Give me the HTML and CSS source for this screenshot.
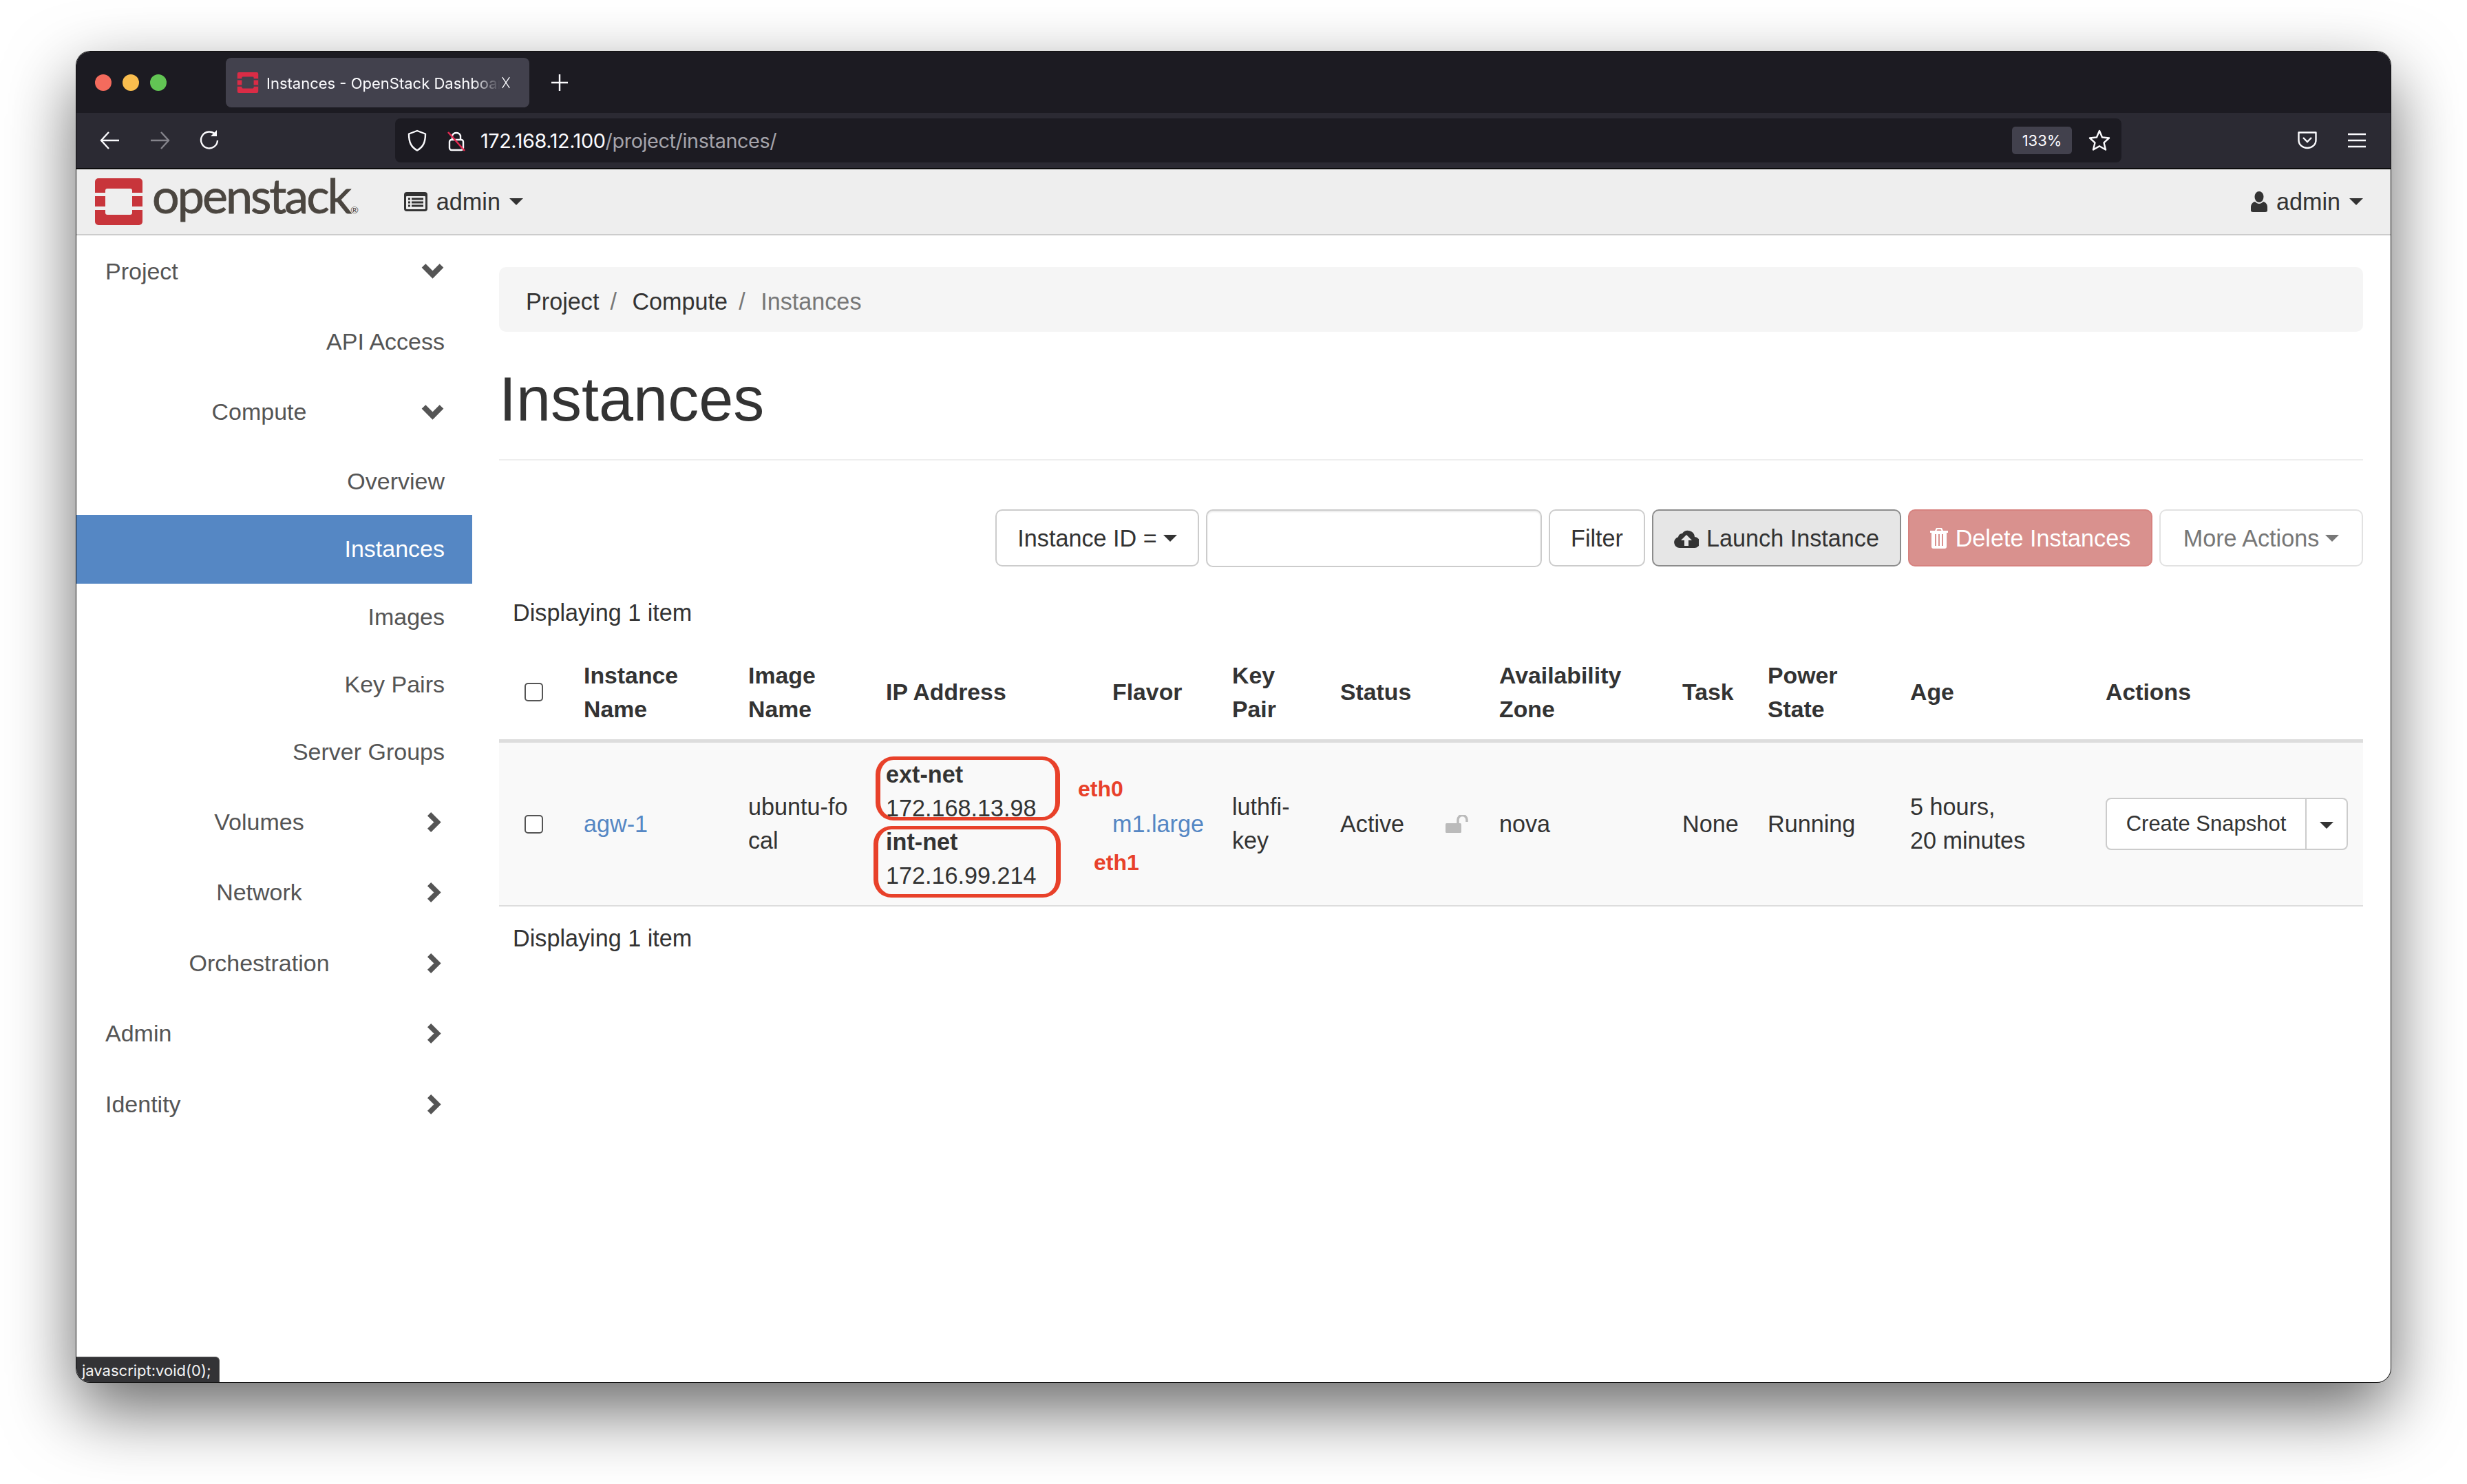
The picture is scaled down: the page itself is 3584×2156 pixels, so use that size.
FILE: index.html
```html
<!DOCTYPE html>
<html lang="en">
  <head>
    <meta charset="UTF-8" />
    <title>Instances - OpenStack Dashboard</title>
    <link rel="stylesheet" href="styles.css">
  </head>
  <body>
    <div class="window">
      <!-- browser chrome -->
      <div class="tabbar">
        <span class="light light-red"></span>
        <span class="light light-yellow"></span>
        <span class="light light-green"></span>
        <div class="tab">
          <svg class="favicon" viewBox="0 0 69 68"><rect width="69" height="68" rx="5" fill="#da2c46"/><rect x="15" y="15" width="39" height="38" rx="3" fill="#42414d"/><rect y="21" width="69" height="5" fill="#42414d"/><rect y="42" width="69" height="5" fill="#42414d"/></svg>
          <span class="tab-title">Instances - OpenStack Dashboard</span>
          <svg class="tab-close" viewBox="0 0 16 24"><path d="M2 3l12 18M14 3L2 21" stroke="#fbfbfe" stroke-width="1.5" fill="none"/></svg>
        </div>
        <svg class="tab-new" viewBox="0 0 24 24"><path d="M12 0v24M0 12h24" stroke="#fbfbfe" stroke-width="2.4" fill="none"/></svg>
      </div>
      <div class="toolbar">
        <span class="tool"><svg width="30" height="26" viewBox="0 0 30 26"><path d="M28 13H2M13 1L2 13l11 12" stroke="#fbfbfe" stroke-width="2.4" fill="none"/></svg></span>
        <span class="tool"><svg width="30" height="26" viewBox="0 0 30 26"><path d="M2 13h26M17 1l11 12-11 12" stroke="#85848c" stroke-width="2.4" fill="none"/></svg></span>
        <span class="tool"><svg width="30" height="30" viewBox="0 0 30 30"><path d="M24 6.5A12 12 0 1 0 27 15" stroke="#fbfbfe" stroke-width="2.4" fill="none"/><path d="M26 0v9h-9z" fill="#fbfbfe"/></svg></span>
        <div class="urlbar">
          <svg class="url-shield" viewBox="0 0 28 32"><path d="M14 2l12 4.500c0 12-3 19-12 24C5 25.500 2 18.500 2 6.500z" stroke="#fbfbfe" stroke-width="2.400" fill="none" stroke-linejoin="round"/></svg>
          <svg class="url-lock" viewBox="0 0 26 32"><path d="M7 15V9a6.500 6.500 0 0 1 12 0v6" stroke="#fbfbfe" stroke-width="2.400" fill="none"/><rect x="3" y="15" width="20" height="15" rx="3" stroke="#fbfbfe" stroke-width="2.400" fill="none"/><path d="M1 4l24 27" stroke="#e22850" stroke-width="2.600"/></svg>
          <span class="url-text">172.168.12.100<span class="url-path">/project/instances/</span></span>
          <span class="zoom-chip">133%</span>
          <svg class="url-star" viewBox="0 0 32 32"><path d="M16 2l4 9.500 10 1-7.500 6.800L25 29.500l-9-5.200-9 5.200 2.500-10.200L2 12.500l10-1z" stroke="#fbfbfe" stroke-width="2.400" fill="none" stroke-linejoin="round"/></svg>
        </div>
        <span class="tool"><svg width="30" height="26" viewBox="0 0 30 26"><path d="M2.500 1.500h25v11c0 7-6 11.500-12.500 11.500S2.500 19.500 2.500 12.500z" stroke="#fbfbfe" stroke-width="2.400" fill="none" stroke-linejoin="round"/><path d="M9 9l6 6 6-6" stroke="#fbfbfe" stroke-width="2.400" fill="none"/></svg></span>
        <span class="tool"><svg width="26" height="22" viewBox="0 0 26 22"><path d="M0 2h26M0 11h26M0 20h26" stroke="#fbfbfe" stroke-width="2.400"/></svg></span>
      </div>

      <!-- openstack navbar -->
      <nav class="navbar">
        <svg class="logo" viewBox="0 0 69 68"><rect width="69" height="68" rx="5" fill="#c8353b"/><rect x="15" y="15" width="39" height="38" rx="3" fill="#eee"/><rect y="21" width="69" height="5" fill="#eee"/><rect y="41" width="69" height="5" fill="#eee"/></svg>
        <span class="brand">openstack<span class="brand-reg">®</span></span>
        <span class="nav-item nav-project">
          <svg class="nav-icon-list" viewBox="0 0 34 28"><path d="M4 0h26a4 4 0 0 1 4 4v20a4 4 0 0 1-4 4H4a4 4 0 0 1-4-4V4a4 4 0 0 1 4-4z" fill="#333"/><rect x="3" y="6" width="28" height="19" rx="1" fill="#eee"/><path d="M6 10h3M11 10h17M6 15h3M11 15h17M6 20h3M11 20h17" stroke="#333" stroke-width="3"/></svg>
          admin <span class="caret"></span>
        </span>
        <span class="nav-item nav-user">
          <svg class="nav-icon-user" viewBox="0 0 24 30"><ellipse cx="12" cy="8" rx="6.500" ry="8" fill="#333"/><path d="M6 15c-4 1-6 4-6 8v5c0 1 1 2 3 2h18c2 0 3-1 3-2v-5c0-4-2-7-6-8-2 2-4 3-6 3s-4-1-6-3z" fill="#333"/></svg>
          admin <span class="caret"></span>
        </span>
      </nav>

      <div class="page">
        <aside class="sidebar">
          <div class="side-row side-head"><span class="side-label">Project</span><span class="chev chev-down"><svg viewBox="0 0 32 24"><path d="M3 4l13 13L29 4" stroke="#555" stroke-width="8" fill="none"/></svg></span></div>
          <div class="side-row side-link side-link-tall">API Access</div>
          <div class="side-row side-head"><span class="side-label side-center">Compute</span><span class="chev chev-down"><svg viewBox="0 0 32 24"><path d="M3 4l13 13L29 4" stroke="#555" stroke-width="8" fill="none"/></svg></span></div>
          <div class="side-row side-link side-link-over">Overview</div>
          <div class="side-row side-link side-active">Instances</div>
          <div class="side-row side-link">Images</div>
          <div class="side-row side-link">Key Pairs</div>
          <div class="side-row side-link">Server Groups</div>
          <div class="side-row side-head"><span class="side-label side-center">Volumes</span><span class="chev"><svg viewBox="0 0 24 32"><path d="M5 3l13 13L5 29" stroke="#555" stroke-width="8" fill="none"/></svg></span></div>
          <div class="side-row side-head"><span class="side-label side-center">Network</span><span class="chev"><svg viewBox="0 0 24 32"><path d="M5 3l13 13L5 29" stroke="#555" stroke-width="8" fill="none"/></svg></span></div>
          <div class="side-row side-head"><span class="side-label side-center">Orchestration</span><span class="chev"><svg viewBox="0 0 24 32"><path d="M5 3l13 13L5 29" stroke="#555" stroke-width="8" fill="none"/></svg></span></div>
          <div class="side-row side-head"><span class="side-label">Admin</span><span class="chev"><svg viewBox="0 0 24 32"><path d="M5 3l13 13L5 29" stroke="#555" stroke-width="8" fill="none"/></svg></span></div>
          <div class="side-row side-head"><span class="side-label">Identity</span><span class="chev"><svg viewBox="0 0 24 32"><path d="M5 3l13 13L5 29" stroke="#555" stroke-width="8" fill="none"/></svg></span></div>
        </aside>

        <main class="main">
          <div class="breadcrumb">
            <span>Project</span><span class="crumb-sep">/</span>
            <span>Compute</span><span class="crumb-sep">/</span>
            <span class="crumb-current">Instances</span>
          </div>
          <div class="page-header"><h1>Instances</h1></div>

          <div class="actions">
            <button class="btn btn-select">Instance ID = <span class="caret"></span></button>
            <input class="filter-input" type="text" />
            <button class="btn btn-filter">Filter</button>
            <button class="btn btn-launch">
              <svg class="btn-icon-cloud" viewBox="0 0 36 27"><path fill-rule="evenodd" fill="#333" d="M8 27a8 8 0 0 1-2-15.700A6 6 0 0 1 12 6a10 10 0 0 1 18 5 8 8 0 0 1-1 16zM18 8l-8 8h5v8h6v-8h5z"/></svg>
              Launch Instance
            </button>
            <button class="btn btn-delete">
              <svg class="btn-icon-trash" viewBox="0 0 26 30"><path fill-rule="evenodd" fill="#fff" d="M9 0h8l2 4h7v3h-2v20a3 3 0 0 1-3 3H5a3 3 0 0 1-3-3V7H0V4h7zM9.500 4h7l-1-2h-5zM7 9v17h2V9zm5 0v17h2V9zm5 0v17h2V9z"/></svg>
              Delete Instances
            </button>
            <button class="btn btn-more">More Actions <span class="caret"></span></button>
          </div>

          <div class="count">Displaying 1 item</div>

          <table class="instances">
            <colgroup>
              <col class="col-check"><col class="col-name"><col class="col-image"><col class="col-ip">
              <col class="col-flavor"><col class="col-key"><col class="col-status"><col class="col-zone">
              <col class="col-task"><col class="col-power"><col class="col-age"><col class="col-actions">
            </colgroup>
            <thead>
              <tr>
                <th><input class="check" type="checkbox" /></th>
                <th>Instance Name</th>
                <th>Image Name</th>
                <th>IP Address</th>
                <th>Flavor</th>
                <th>Key Pair</th>
                <th>Status</th>
                <th>Availability Zone</th>
                <th>Task</th>
                <th>Power State</th>
                <th>Age</th>
                <th>Actions</th>
              </tr>
            </thead>
            <tbody>
              <tr>
                <td><input class="check" type="checkbox" /></td>
                <td><a class="link">agw-1</a></td>
                <td class="cell-break">ubuntu-focal</td>
                <td class="cell-ip">
                  <strong>ext-net</strong><br>172.168.13.98<br>
                  <strong>int-net</strong><br>172.16.99.214
                  <span class="mark mark-ext"></span>
                  <span class="mark mark-int"></span>
                  <span class="eth eth-0">eth0</span>
                  <span class="eth eth-1">eth1</span>
                </td>
                <td class="cell-flavor"><a class="link">m1.large</a></td>
                <td>luthfi-key</td>
                <td class="cell-status">Active
                  <svg class="lock-open" viewBox="0 0 34 26"><rect y="12" width="23" height="14" rx="1.500" fill="#bbb"/><path d="M18 12V7a6.500 6.500 0 0 1 13 0v3" stroke="#bbb" stroke-width="3.500" fill="none"/></svg>
                </td>
                <td>nova</td>
                <td>None</td>
                <td>Running</td>
                <td>5 hours, 20&nbsp;minutes</td>
                <td>
                  <div class="split">
                    <button class="split-main">Create Snapshot</button>
                    <button class="split-caret"><span class="caret"></span></button>
                  </div>
                </td>
              </tr>
            </tbody>
          </table>

          <div class="count count-foot">Displaying 1 item</div>
        </main>
      </div>

      <div class="statusbar">javascript:void(0);</div>
    </div>
  </body>
</html>
```

FILE: styles.css
```css
* {
  box-sizing: border-box;
}
body {
  margin: 0;
  height: 2156px;
  overflow: hidden;
  background-color: #fff;
  font-family: "Liberation Sans", Arial, sans-serif;
  font-size: 34.2px;
  line-height: 49px;
  color: #333;
}
.window {
  position: relative;
  width: 3362px;
  height: 1933px;
  margin: 75px 111px 0;
  display: flex;
  flex-direction: column;
  background-color: #fff;
  border-radius: 20px;
  overflow: hidden;
  box-shadow: 0 0 0 1px #111, 0 40px 100px rgba(0, 0, 0, 0.6);
}

/* browser chrome */
.tabbar {
  height: 89px;
  display: flex;
  align-items: center;
  gap: 16px;
  padding-left: 27px;
  background-color: #1c1b22;
  font-family: Inter, "Liberation Sans", sans-serif;
}
.light {
  width: 24px;
  height: 24px;
  border-radius: 50%;
}
.light-red {
  background-color: #f46b5d;
}
.light-yellow {
  background-color: #f9bd4e;
}
.light-green {
  background-color: #62c554;
}
.tab {
  width: 441px;
  height: 72px;
  margin-left: 70px;
  padding-left: 16px;
  display: flex;
  align-items: center;
  background-color: #42414d;
  border-radius: 8px;
}
.favicon {
  width: 32px;
  height: 30px;
  flex: none;
}
.tab-title {
  width: 340px;
  margin-left: 11px;
  padding-top: 3px;
  flex: none;
  overflow: hidden;
  white-space: nowrap;
  font-size: 22px;
  letter-spacing: 0;
  color: #fbfbfe;
  -webkit-mask-image: linear-gradient(to right, #000 88%, transparent);
  mask-image: linear-gradient(to right, #000 88%, transparent);
}
.tab-close {
  width: 14px;
  height: 22px;
  margin-left: 1px;
  flex: none;
}
.tab-new {
  width: 24px;
  height: 24px;
  margin-left: 16px;
}
.toolbar {
  height: 80px;
  display: flex;
  align-items: center;
  padding: 0 13px;
  background-color: #2b2a33;
  font-family: Inter, "Liberation Sans", sans-serif;
}
.tool {
  width: 72px;
  display: flex;
  justify-content: center;
  align-items: center;
}
.urlbar {
  flex: 1;
  height: 64px;
  margin: 0 234px;
  display: flex;
  align-items: center;
  padding-left: 18px;
  background-color: #1c1b22;
  border-radius: 8px;
}
.url-shield {
  width: 28px;
  height: 32px;
}
.url-lock {
  width: 26px;
  height: 32px;
  margin-left: 30px;
}
.url-text {
  flex: 1;
  margin-left: 22px;
  padding-top: 1px;
  font-size: 28.8px;
  letter-spacing: -0.4px;
  color: #fbfbfe;
}
.url-path {
  color: #a5a4ab;
}
.zoom-chip {
  width: 87px;
  height: 40px;
  display: flex;
  align-items: center;
  justify-content: center;
  background-color: #42414d;
  border-radius: 5px;
  font-size: 22px;
  color: #fbfbfe;
}
.url-star {
  width: 32px;
  height: 32px;
  margin: 0 16px 0 24px;
}

/* openstack navbar */
.navbar {
  height: 98px;
  flex: none;
  display: flex;
  align-items: center;
  padding: 0 40px 0 27px;
  background-color: #eee;
  border-top: 2px solid #0c0c0d;
  border-bottom: 2px solid #ccc;
}
.logo {
  width: 69px;
  height: 68px;
  flex: none;
}
.brand {
  margin-left: 14px;
  padding-top: 2px;
  font-family: Lato, "Open Sans", sans-serif;
  font-size: 70px;
  line-height: 68px;
  letter-spacing: -3px;
  color: #4b4640;
  -webkit-text-stroke: 0.8px #4b4640;
}
.brand-reg {
  font-size: 14px;
  letter-spacing: 0;
  margin-left: 1px;
  -webkit-text-stroke: 0;
}
.nav-item {
  display: flex;
  align-items: center;
  gap: 13px;
}
.nav-project {
  margin-left: 66px;
}
.nav-user {
  margin-left: auto;
}
.nav-icon-list {
  width: 34px;
  height: 28px;
}
.nav-icon-user {
  width: 24px;
  height: 30px;
}
.caret {
  display: inline-block;
  width: 0;
  height: 0;
  vertical-align: middle;
  border-top: 10px solid currentColor;
  border-left: 10px solid transparent;
  border-right: 10px solid transparent;
}

/* sidebar */
.page {
  flex: 1;
  display: flex;
}
.sidebar {
  width: 575px;
  flex: none;
  font-size: 34px;
  color: #555;
}
.side-row {
  display: flex;
  align-items: center;
  padding: 2px 40px 0 42px;
}
.side-head {
  height: 102.5px;
  padding-right: 32px;
}
.side-label {
  flex: 1;
}
.side-center {
  text-align: center;
}
.chev {
  width: 54px;
  display: flex;
  justify-content: center;
  padding-left: 6px;
}
.chev svg {
  width: 22px;
  height: 33px;
}
.chev-down {
  padding-left: 2px;
}
.chev-down svg {
  width: 33px;
  height: 24px;
}
.side-link {
  height: 98px;
  padding-top: 0;
  padding-bottom: 1px;
  justify-content: flex-end;
}
.side-link-tall {
  height: 102px;
  padding-bottom: 0;
  padding-top: 2px;
}
.side-link-over {
  height: 99px;
  padding-bottom: 0;
  padding-top: 2px;
}
.side-active {
  height: 100px;
  background-color: #5587c4;
  color: #fff;
}

/* main */
.main {
  flex: 1;
  min-width: 0;
  padding: 46px 40px 0 39px;
}
.breadcrumb {
  height: 94px;
  padding: 6px 0 0 39px;
  display: flex;
  align-items: center;
  background-color: #f5f5f5;
  border-radius: 10px;
}
.crumb-sep {
  width: 48px;
  padding-left: 16px;
  color: #777;
}
.crumb-current {
  color: #777;
}
.page-header {
  height: 187px;
  padding-top: 12px;
  display: flex;
  align-items: center;
  border-bottom: 2px solid #eee;
}
.page-header h1 {
  margin: 0;
  font-size: 90px;
  font-weight: 500;
  line-height: 97px;
}
.actions {
  margin-top: 71px;
  height: 83px;
  display: flex;
  justify-content: flex-end;
  gap: 10px;
}
.btn {
  height: 83px;
  padding: 1px 0 0;
  display: flex;
  align-items: center;
  justify-content: center;
  gap: 11px;
  font-family: inherit;
  font-size: 34.2px;
  color: #333;
  white-space: nowrap;
  background-color: #fff;
  border: 2px solid #ccc;
  border-radius: 10px;
}
.btn-select {
  width: 296px;
  gap: 9px;
}
.filter-input {
  width: 488px;
  height: 84px;
  border: 2px solid #ccc;
  border-radius: 10px;
  box-shadow: inset 0 2px 2px rgba(0, 0, 0, 0.08);
}
.btn-filter {
  width: 140px;
}
.btn-launch {
  width: 362px;
  background-color: #e6e6e6;
  border-color: #8c8c8c;
}
.btn-delete {
  width: 355px;
  color: #fff;
  background-color: #d9918e;
  border-color: #d6827f;
}
.btn-more {
  width: 296px;
  gap: 9px;
  color: #777;
  border-color: #e2e2e2;
}
.btn-icon-cloud {
  width: 36px;
  height: 27px;
}
.btn-icon-trash {
  width: 26px;
  height: 30px;
}
.count {
  margin-top: 43px;
  padding-left: 20px;
}
.count-foot {
  margin-top: 22px;
}

/* instances table */
.instances {
  width: 2708px;
  margin-top: 22px;
  table-layout: fixed;
  border-collapse: separate;
  border-spacing: 0;
}
.col-check { width: 103px; }
.col-name { width: 239px; }
.col-image { width: 200px; }
.col-ip { width: 329px; }
.col-flavor { width: 174px; }
.col-key { width: 157px; }
.col-status { width: 231px; }
.col-zone { width: 266px; }
.col-task { width: 124px; }
.col-power { width: 207px; }
.col-age { width: 284px; }
.col-actions { width: 394px; }
.instances th,
.instances td {
  padding: 19px 20px;
  text-align: left;
  vertical-align: middle;
}
.instances th {
  height: 142px;
  border-bottom: 5px solid #ddd;
  font-size: 33.8px;
  font-weight: bold;
}
.instances td {
  height: 238px;
  background-color: #f9f9f9;
  border-bottom: 2px solid #ddd;
}
.instances th:first-child,
.instances td:first-child {
  padding-left: 37px;
  padding-right: 0;
}
.check {
  -webkit-appearance: none;
  appearance: none;
  display: block;
  width: 27px;
  height: 27px;
  margin: 0;
  background-color: #fff;
  border: 2px solid #555;
  border-radius: 5px;
}
.link {
  color: #5587c4;
}
.cell-break {
  word-break: break-all;
}
.instances td.cell-ip {
  position: relative;
  padding-top: 21px;
  padding-bottom: 17px;
}
.mark {
  position: absolute;
  border-style: solid;
  border-color: #e8412a;
  border-width: 5px 7px;
  border-radius: 26px;
}
.mark-ext {
  left: 5px;
  top: 20px;
  width: 268px;
  height: 93px;
}
.mark-int {
  left: 2px;
  top: 121px;
  width: 272px;
  height: 104px;
}
.eth {
  position: absolute;
  font-size: 32px;
  line-height: 40px;
  font-weight: bold;
  color: #e8412a;
}
.eth-0 {
  left: 299px;
  top: 47px;
}
.eth-1 {
  left: 322px;
  top: 154px;
}
.cell-status {
  white-space: nowrap;
}
.lock-open {
  width: 34px;
  height: 26px;
  margin-left: 50px;
  vertical-align: -1px;
}
.split {
  display: flex;
  width: 352px;
  height: 76px;
  background-color: #fff;
  border: 2px solid #ccc;
  border-radius: 8px;
}
.split button {
  padding: 0;
  font-family: inherit;
  font-size: 31px;
  color: #333;
  background: none;
  border: 0;
}
.split .split-main {
  width: 290px;
  border-right: 2px solid #ccc;
}
.split-caret {
  flex: 1;
}

.statusbar {
  position: absolute;
  left: 0;
  bottom: 0;
  width: 208px;
  height: 37px;
  padding-left: 8px;
  font-family: Inter, "Liberation Sans", sans-serif;
  font-size: 22px;
  line-height: 38px;
  color: #f4f4f4;
  background-color: #333336;
  border-top: 1px solid #555;
  border-right: 1px solid #555;
  border-top-right-radius: 6px;
}
```
